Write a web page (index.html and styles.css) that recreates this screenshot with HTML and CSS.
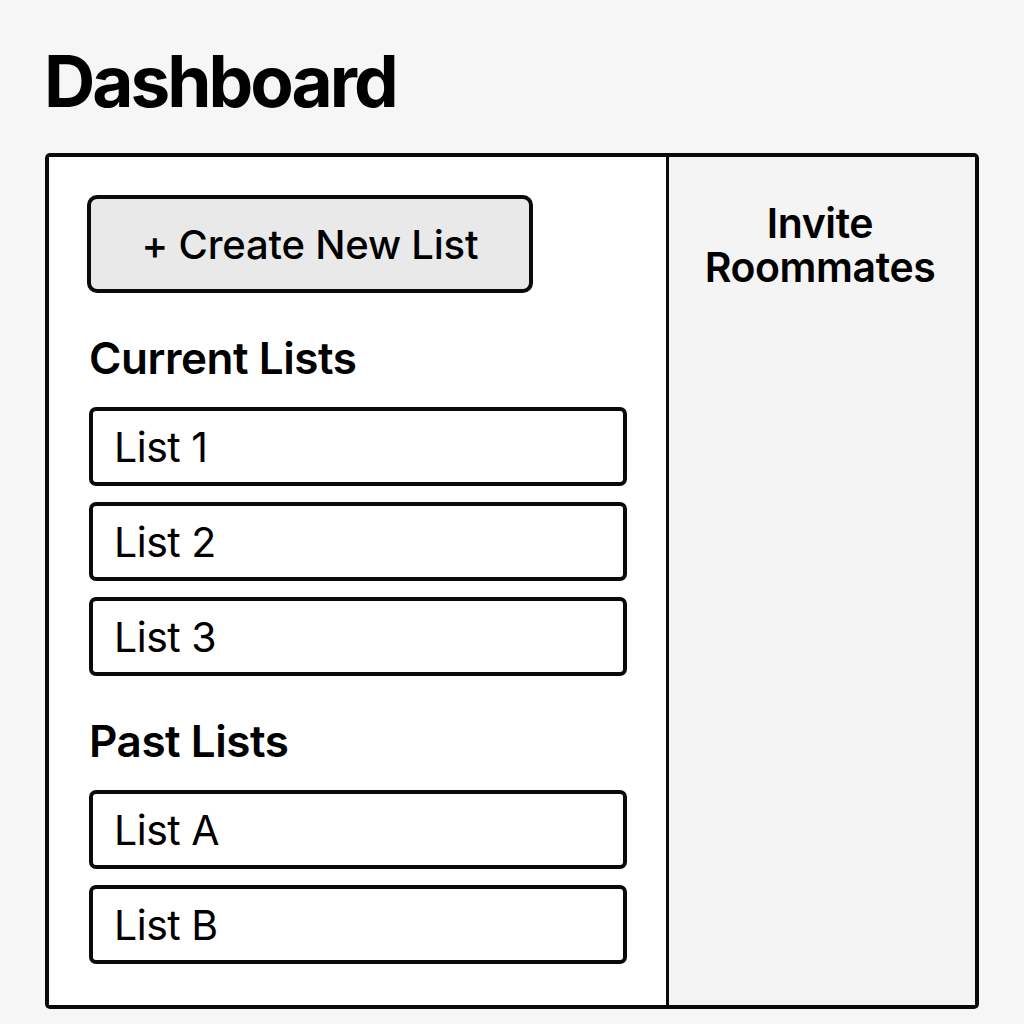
FILE: index.html
```html
<!DOCTYPE html>
<html lang="en">
<head>
<meta charset="utf-8">
<title>Dashboard</title>
<link rel="stylesheet" href="styles.css">
</head>
<body>
  <h1 class="title">Dashboard</h1>
  <div class="board">
    <section class="main-panel">
      <button class="create-btn">+ Create New List</button>
      <h2 class="section-title">Current Lists</h2>
      <ul class="lists">
        <li class="list-item">List 1</li>
        <li class="list-item">List 2</li>
        <li class="list-item">List 3</li>
      </ul>
      <h2 class="section-title">Past Lists</h2>
      <ul class="lists">
        <li class="list-item">List A</li>
        <li class="list-item">List B</li>
      </ul>
    </section>
    <aside class="side-panel">
      <h2 class="side-title">Invite<br>Roommates</h2>
    </aside>
  </div>
</body>
</html>
```

FILE: styles.css
```css
* { box-sizing: border-box; }

html, body {
  margin: 0;
  padding: 0;
  background: #f6f6f6;
}

body {
  font-family: Inter, "Liberation Sans", Arial, sans-serif;
  color: #000;
  padding: 46px 0 0 45px;
}

.title {
  margin: 0 0 36px -1px;
  font-size: 71px;
  line-height: 71px;
  font-weight: 700;
  letter-spacing: -0.042em;
}

.board {
  width: 934px;
  height: 856px;
  border: 4px solid #0a0a0a;
  border-radius: 5px;
  display: grid;
  grid-template-columns: 617px 1fr;
  overflow: hidden;
  background: #fff;
}

.main-panel {
  background: #fff;
  padding: 38px 0 0 38px;
  display: flex;
  flex-direction: column;
}

.create-btn {
  width: 446px;
  height: 98px;
  border: 4px solid #0a0a0a;
  border-radius: 10px;
  background: #e9e9e9;
  font-family: inherit;
  font-size: 40px;
  font-weight: 500;
  color: #000;
  letter-spacing: -0.005em;
  padding: 0;
  margin: 0;
}

.section-title {
  margin: 39px 0 23px 2px;
  font-size: 44px;
  line-height: 52px;
  font-weight: 600;
  letter-spacing: -0.01em;
}

.lists {
  list-style: none;
  margin: 0 0 0 2px;
  padding: 0;
  display: flex;
  flex-direction: column;
  gap: 16px;
}

.list-item {
  width: 538px;
  height: 79px;
  border: 4px solid #0a0a0a;
  border-radius: 7px;
  padding: 0 0 0 21px;
  font-size: 41px;
  line-height: 73px;
  font-weight: 400;
  letter-spacing: -0.012em;
}

.side-panel {
  background: #f4f4f4;
  border-left: 3px solid #0a0a0a;
  padding: 44px 4px 0 0;
  text-align: center;
}

.side-title {
  margin: 0;
  font-size: 41px;
  line-height: 44px;
  font-weight: 600;
  letter-spacing: -0.01em;
}
```
